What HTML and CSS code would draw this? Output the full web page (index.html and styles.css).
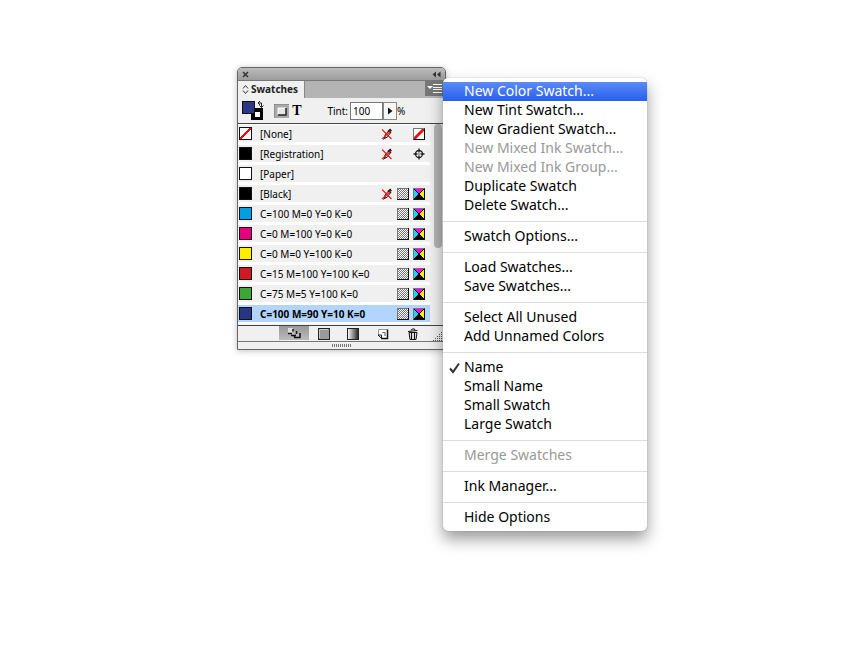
FILE: index.html
```html
<!DOCTYPE html>
<html lang="en">
<head>
<meta charset="utf-8">
<title>Swatches</title>
<link rel="stylesheet" href="styles.css">
</head>
<body>
<svg class="defs" aria-hidden="true">
  <defs>
    <linearGradient id="shade" x1="0" x2="1"><stop offset="0" stop-color="#fff"/><stop offset="1" stop-color="#222"/></linearGradient>
    <pattern id="dots" width="2" height="2" patternUnits="userSpaceOnUse"><rect width="2" height="2" fill="#fff"/><rect width="1" height="1" fill="#777"/><rect x="1" y="1" width="1" height="1" fill="#777"/></pattern>
    <symbol id="lock" viewBox="0 0 12 12"><path d="M3.500 10.500l.5-3.500L7.500 3l2 1.500-3 4.500z" fill="#ddd" stroke="#222"/><path d="M7 2.500l3 2.500" stroke="#111" stroke-width="1.500"/><path d="M8.500 3L10 1.500" stroke="#111" stroke-width="2.500"/><path d="M2.500 11.500l2-3" stroke="#111"/><path d="M1 1.500l9.500 9.500M1 11L10 3" stroke="#e8201c" stroke-width="1.200"/></symbol>
    <symbol id="tone" viewBox="0 0 12 12"><rect width="12" height="12" fill="#111"/><rect width="11" height="11" fill="#777"/><rect x="1" y="1" width="10" height="10" fill="url(#dots)"/></symbol>
    <symbol id="cmyk" viewBox="0 0 12 12"><rect width="12" height="12" fill="#111"/><path d="M0 0h12L11 1H1v10l-1 1z" fill="#777"/><path d="M1 1h10L6 6z" fill="#f0e"/><path d="M1 1l5 5-5 5z" fill="#0df"/><path d="M11 1L6 6l5 5z" fill="#fe0"/><path d="M1 11l5-5 5 5z" fill="#000"/><path d="M1 1l10 10M11 1L1 11" stroke="#000"/></symbol>
    <symbol id="none" viewBox="0 0 12 12"><rect width="12" height="12" fill="#111"/><path d="M0 0h12L11 1H1v10l-1 1z" fill="#777"/><rect x="1" y="1" width="10" height="10" fill="#fff"/><path d="M1 11v-2L9 1h2v2L3 11z" fill="#d91414"/></symbol>
    <symbol id="target" viewBox="0 0 12 12"><circle cx="6" cy="6" r="3.500" fill="none" stroke="#222" stroke-width="1.300"/><path d="M6 .5v4M6 7.500v4M.5 6h4M7.500 6h4" stroke="#222" stroke-width="1.300"/><circle cx="6" cy="6" r=".7" fill="#222"/></symbol>
  </defs>
</svg>
<main class="desktop">
  <section class="panel" aria-label="Swatches">
    <header class="titlebar">
      <button class="plain" aria-label="Close"><svg width="7" height="7" viewBox="0 0 7 7"><path d="M1 1l5 5M6 1L1 6" stroke="#333" stroke-width="1.500"/></svg></button>
      <button class="plain" aria-label="Collapse"><svg width="9" height="7" viewBox="0 0 9 7"><path d="M4 .5v6L.5 3.500zM8.500 .5v6L5 3.500z" fill="#333"/></svg></button>
    </header>
    <div class="tabs">
      <button class="tab"><svg width="7" height="11" viewBox="0 0 7 11"><path d="M1 4.500L3.500 1.500 6 4.500M1 6.500L3.500 9.500 6 6.500" fill="none" stroke="#333"/></svg>Swatches</button>
      <button class="flyout" aria-label="Panel menu"><svg width="15" height="9" viewBox="0 0 15 9"><path d="M0 2h6L3 5z" fill="#fff"/><path d="M6 .5h9M6 3.500h9M6 5.500h9M6 8.500h9" stroke="#fff"/></svg></button>
    </div>
    <div class="tools">
      <button class="plain" aria-label="Fill and stroke"><svg width="24" height="22" viewBox="0 0 24 22"><rect x="9" y="8" width="12" height="12" fill="#000"/><rect x="13" y="12" width="5" height="5" fill="#fff"/><rect x=".5" y="1.500" width="12" height="12" fill="#2b3885" stroke="#111"/><path d="M16 3h3.500v4M18 1l-2 2 2 2M17.500 5.500l2 2 2-2" fill="none" stroke="#222"/></svg></button>
      <button class="plain formatting" aria-label="Formatting affects container"><svg width="15" height="14" viewBox="0 0 15 14"><rect width="15" height="14" fill="#aaa"/><path d="M0 14V0h15" fill="none" stroke="#777"/><path d="M4 4h8v7H4z" fill="#e6e6e6"/><path d="M4 11V4h8" fill="none" stroke="#fff"/><path d="M4 11h8V4" fill="none" stroke="#222" stroke-width="1.500"/></svg></button>
      <button class="plain type" aria-label="Formatting affects text">T</button>
      <label class="tint" for="tint">Tint:</label>
      <input id="tint" class="value" value="100">
      <button class="step" aria-label="Tint slider"><svg width="5" height="8" viewBox="0 0 5 8"><path d="M0 .5v7L4.500 4z" fill="#111"/></svg></button>
      <span>%</span>
    </div>
    <div class="content">
      <ul class="list">
        <li><i class="chip empty"></i><span>[None]</span><svg class="c1"><use href="#lock"/></svg><svg class="c3"><use href="#none"/></svg></li>
        <li><i class="chip black"></i><span>[Registration]</span><svg class="c1"><use href="#lock"/></svg><svg class="c3"><use href="#target"/></svg></li>
        <li><i class="chip paper"></i><span>[Paper]</span></li>
        <li><i class="chip black"></i><span>[Black]</span><svg class="c1"><use href="#lock"/></svg><svg class="c2"><use href="#tone"/></svg><svg class="c3"><use href="#cmyk"/></svg></li>
        <li><i class="chip cyan"></i><span>C=100 M=0 Y=0 K=0</span><svg class="c2"><use href="#tone"/></svg><svg class="c3"><use href="#cmyk"/></svg></li>
        <li><i class="chip magenta"></i><span>C=0 M=100 Y=0 K=0</span><svg class="c2"><use href="#tone"/></svg><svg class="c3"><use href="#cmyk"/></svg></li>
        <li><i class="chip yellow"></i><span>C=0 M=0 Y=100 K=0</span><svg class="c2"><use href="#tone"/></svg><svg class="c3"><use href="#cmyk"/></svg></li>
        <li><i class="chip red"></i><span>C=15 M=100 Y=100 K=0</span><svg class="c2"><use href="#tone"/></svg><svg class="c3"><use href="#cmyk"/></svg></li>
        <li><i class="chip green"></i><span>C=75 M=5 Y=100 K=0</span><svg class="c2"><use href="#tone"/></svg><svg class="c3"><use href="#cmyk"/></svg></li>
        <li class="selected"><i class="chip blue"></i><span>C=100 M=90 Y=10 K=0</span><svg class="c2"><use href="#tone"/></svg><svg class="c3"><use href="#cmyk"/></svg></li>
      </ul>
      <div class="track"><div class="thumb"></div></div>
    </div>
    <footer class="actions">
      <button class="plain on" aria-label="Show all swatches"><svg width="16" height="12" viewBox="0 0 16 12"><path d="M2 1h5v5H2z" fill="#ddd"/><path d="M2 6.500h5V2" fill="none" stroke="#111" stroke-width="1.500"/><path d="M6 4.500h4V8H6z" fill="#bbb"/><path d="M5 8.500h5.500V4" fill="none" stroke="#111" stroke-width="1.500"/><path d="M10 7h3v3h-3z" fill="#bbb"/><path d="M8 10.500h6V6M8.500 10V8" fill="none" stroke="#111" stroke-width="1.500"/></svg></button>
      <button class="plain" aria-label="Show color swatches"><svg width="12" height="12" viewBox="0 0 12 12"><rect x=".5" y=".5" width="11" height="11" fill="#999" stroke="#222"/><path d="M1.500 10V1.500H10" fill="none" stroke="#ccc"/></svg></button>
      <button class="plain" aria-label="Show gradient swatches"><svg width="12" height="12" viewBox="0 0 12 12"><rect x=".5" y=".5" width="11" height="11" fill="url(#shade)" stroke="#222"/></svg></button>
      <button class="plain" aria-label="New swatch"><svg width="12" height="12" viewBox="0 0 12 12"><path d="M1.500 1.500h9v9H5L1.500 7z" fill="#fff"/><path d="M1.500 7V1.500h9" fill="none" stroke="#999"/><path d="M4 10.500h6.500V1.500" fill="none" stroke="#111" stroke-width="1.500"/><path d="M1 7l3.500 3.500V7z" fill="#ddd" stroke="#222"/><path d="M5.500 4.500h2.500V8" fill="none" stroke="#555"/></svg></button>
      <button class="plain" aria-label="Delete swatch"><svg width="12" height="12" viewBox="0 0 12 12"><path d="M2 4.500h8L9 11.500H3z" fill="#ddd" stroke="#111"/><path d="M1 3.500L10.500 2.500M4 2.500l1-1.500 2.500 0L8 2.500M4.500 5v6M7.500 5v6" fill="none" stroke="#111"/></svg></button>
      <svg class="resize" width="12" height="10" viewBox="0 0 12 10"><path d="M0 9.500h12M2 7.500h10M4 5.500h8M6 3.500h6M8 1.500h4" stroke="#555" stroke-dasharray="1 1"/></svg>
    </footer>
    <div class="grip"><svg width="20" height="3" viewBox="0 0 20 3"><path d="M0 1.500h20" stroke="#777" stroke-width="3" stroke-dasharray="1 1"/></svg></div>
  </section>

  <div class="menu" role="menu">
    <button role="menuitem" class="active">New Color Swatch...</button>
    <button role="menuitem">New Tint Swatch...</button>
    <button role="menuitem">New Gradient Swatch...</button>
    <button role="menuitem" disabled>New Mixed Ink Swatch...</button>
    <button role="menuitem" disabled>New Mixed Ink Group...</button>
    <button role="menuitem">Duplicate Swatch</button>
    <button role="menuitem">Delete Swatch...</button>
    <hr>
    <button role="menuitem">Swatch Options...</button>
    <hr>
    <button role="menuitem">Load Swatches...</button>
    <button role="menuitem">Save Swatches...</button>
    <hr>
    <button role="menuitem">Select All Unused</button>
    <button role="menuitem">Add Unnamed Colors</button>
    <hr>
    <button role="menuitemradio" aria-checked="true"><svg class="check" width="11" height="12" viewBox="0 0 11 12"><path d="M1 6.500L4 10 10 1.500" fill="none" stroke="#333" stroke-width="2"/></svg>Name</button>
    <button role="menuitemradio" aria-checked="false">Small Name</button>
    <button role="menuitemradio" aria-checked="false">Small Swatch</button>
    <button role="menuitemradio" aria-checked="false">Large Swatch</button>
    <hr>
    <button role="menuitem" disabled>Merge Swatches</button>
    <hr>
    <button role="menuitem">Ink Manager...</button>
    <hr>
    <button role="menuitem">Hide Options</button>
  </div>
</main>
</body>
</html>
```
FILE: styles.css
```css
* { box-sizing: border-box; }
body { margin: 0; background: #fff; color: #000; font-family: "Lucida Grande", "Noto Sans", sans-serif; }
button, input { font: inherit; color: inherit; margin: 0; padding: 0; border: 0; border-radius: 0; background: none; }
svg { display: block; flex: none; }
.defs { position: absolute; width: 0; height: 0; }
.desktop { display: flex; align-items: flex-start; min-height: 100vh; padding: 67px 0 64px 237px; }

.panel { flex: none; width: 209px; border: 1px solid #666; border-radius: 5px 5px 0 0; background: #f0f0f0; box-shadow: 0 1px 6px rgba(0,0,0,.25); font-size: 10px; overflow: hidden; }
.plain { display: flex; align-items: center; justify-content: center; }
.titlebar { display: flex; align-items: center; justify-content: space-between; height: 13px; padding: 0 4px; background: linear-gradient(#bcbcbc, #9c9c9c); border-bottom: 1px solid #777; }
.tabs { display: flex; justify-content: space-between; height: 17px; padding-right: 2px; background: #b4b4b4; }
.tab { display: flex; align-items: center; gap: 2px; padding: 0 6px 0 4px; border-right: 1px solid #888; background: #f0f0f0; font-weight: bold; line-height: 15px; color: #222; }
.flyout { display: flex; align-items: center; justify-content: center; width: 18px; height: 15px; background: #777; }
.tools { display: flex; align-items: center; height: 26px; padding-left: 4px; border-bottom: 1px solid #444; }
.formatting { margin-left: 8px; }
.type { width: 16px; font: bold 14px "Liberation Serif", serif; }
.tint { margin: 0 2px 0 auto; }
.value { width: 33px; height: 18px; padding: 0 2px; border: 1px solid #777; background: #fff; }
.step { display: flex; align-items: center; justify-content: center; width: 14px; height: 18px; border: 1px solid #888; background: #f6f6f6; }
.tools span { width: 48px; }

.content { display: flex; padding-bottom: 1px; border-bottom: 1px solid #444; }
.list { flex: 1; margin: 0; padding: 0; list-style: none; }
.list li { display: grid; grid-template-columns: 13px 1fr 16px 16px 12px; align-items: center; height: 20px; padding: 0 5px 0 1px; border: solid #fff; border-width: 1px 0 2px; line-height: 16px; white-space: nowrap; }
.list li span { grid-column: 2; grid-row: 1; padding-left: 8px; }
.list .selected { background: #b3d4fc; font-weight: bold; }
.list svg { grid-row: 1; width: 12px; height: 12px; }
.c1 { grid-column: 3; }
.c2 { grid-column: 4; }
.c3 { grid-column: 5; }
.chip { width: 13px; height: 13px; border: 1px solid #111; }
.empty { background: linear-gradient(to bottom right, #fff 41%, #f00 42%, #f00 58%, #fff 59%); }
.paper { background: #fff; }
.black { background: #000; }
.cyan { background: #009fe3; }
.magenta { background: #e6007e; }
.yellow { background: #ffed00; }
.red { background: #cf1a26; }
.green { background: #3fa535; }
.blue { background: #283583; }
.track { width: 15px; padding-left: 4px; }
.thumb { width: 8px; height: 124px; border-radius: 4px; background: #b4b4b4; }

.actions { display: flex; height: 16px; padding-left: 41px; border-bottom: 1px solid #777; }
.actions button { width: 30px; }
.actions .on { background: linear-gradient(#999, #bbb); height: 14px; }
.resize { align-self: flex-end; margin-left: 5px; }
.grip { display: flex; align-items: center; justify-content: center; height: 7px; }

.menu { position: relative; flex: none; width: 204px; margin: 11px 0 0 -3px; padding: 4px 0; border-radius: 5px; background: #fff; box-shadow: 0 0 1px rgba(0,0,0,.45), 0 8px 16px rgba(0,0,0,.4); font-size: 14px; }
.menu button { display: block; position: relative; width: 100%; height: 19px; padding: 0 0 2px 21px; line-height: 17px; text-align: left; white-space: nowrap; }
.menu button:disabled { color: #999; }
.menu .active { background: linear-gradient(#5c8bf5, #2560ee); color: #fff; }
.menu hr { height: 1px; margin: 6px 0 5px; border: 0; background: #ddd; }
.check { position: absolute; left: 6px; top: 4px; }
```
